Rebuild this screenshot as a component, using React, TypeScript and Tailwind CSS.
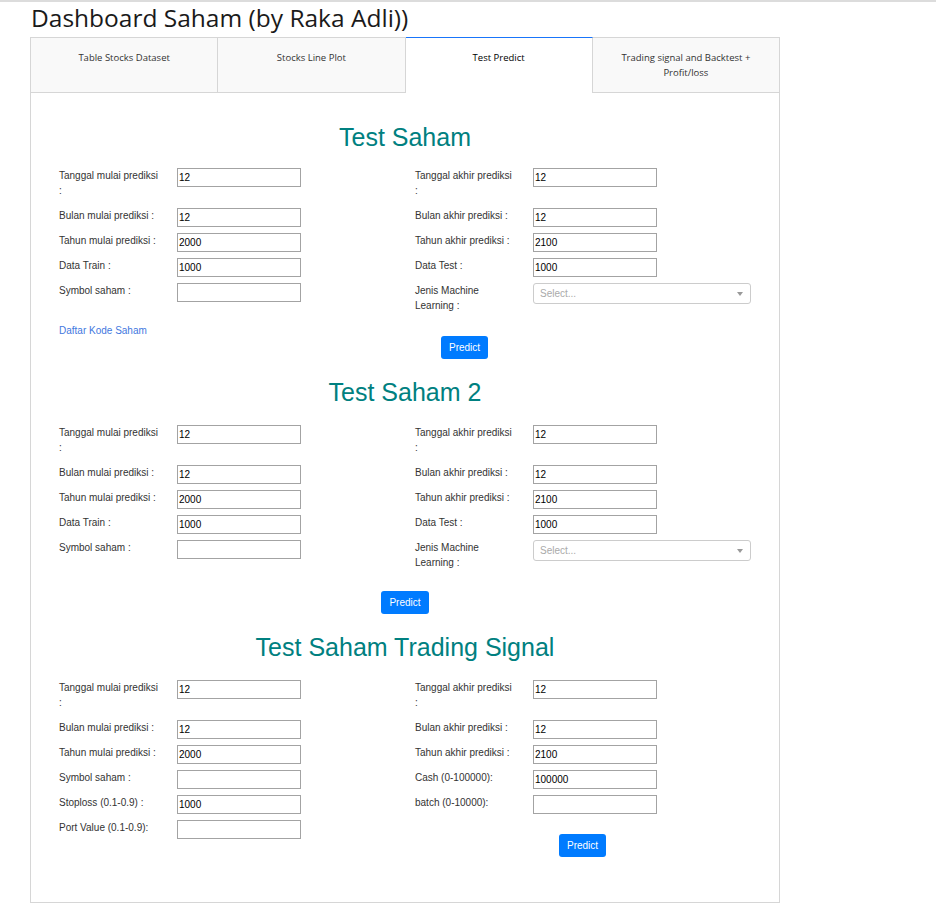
import React from "react";

const tabs = [
  "Table Stocks Dataset",
  "Stocks Line Plot",
  "Test Predict",
  "Trading signal and Backtest + Profit/loss",
];

type Row = { label: string; value?: string; select?: boolean };

function Field({ label, value, select }: Row) {
  return (
    <div className="flex items-start">
      <div className="w-[118px] pr-[18px] pb-[4px] leading-[15px] text-[10px] text-[#333]">{label}</div>
      {select ? (
        <div className="w-[218px] h-[21px] border border-[#cccccc] rounded-[3px] bg-white flex items-center justify-between pl-[6px] pr-[7px]">
          <span className="text-[10px] text-[#aaaaaa]">Select...</span>
          <span className="w-0 h-0 border-x-[3px] border-t-[4px] border-x-transparent border-t-[#999999]" />
        </div>
      ) : (
        <div className="w-[124px] h-[19px] border border-[#a3a3a3] bg-white flex items-center pl-[1px] text-[10px] text-black">
          {value}
        </div>
      )}
    </div>
  );
}

function Column({ rows, children }: { rows: Row[]; children?: React.ReactNode }) {
  return (
    <div className="flex flex-col gap-[6px]">
      {rows.map((r) => (
        <Field key={r.label} {...r} />
      ))}
      {children}
    </div>
  );
}

function PredictButton() {
  return (
    <button className="h-[23px] px-[8px] rounded-[3px] bg-[#007bff] text-white text-[10px]">Predict</button>
  );
}

function Title({ children, first }: { children: React.ReactNode; first?: boolean }) {
  return (
    <h2
      className={`text-center text-[25px] leading-[28px] text-[#008080] ${first ? "mb-[17px]" : "mb-[19px]"}`}
    >
      {children}
    </h2>
  );
}

const leftA: Row[] = [
  { label: "Tanggal mulai prediksi :", value: "12" },
  { label: "Bulan mulai prediksi :", value: "12" },
  { label: "Tahun mulai prediksi :", value: "2000" },
  { label: "Data Train :", value: "1000" },
  { label: "Symbol saham :", value: "" },
];

const rightA: Row[] = [
  { label: "Tanggal akhir prediksi :", value: "12" },
  { label: "Bulan akhir prediksi :", value: "12" },
  { label: "Tahun akhir prediksi :", value: "2100" },
  { label: "Data Test :", value: "1000" },
  { label: "Jenis Machine Learning :", select: true },
];

const leftC: Row[] = [
  { label: "Tanggal mulai prediksi :", value: "12" },
  { label: "Bulan mulai prediksi :", value: "12" },
  { label: "Tahun mulai prediksi :", value: "2000" },
  { label: "Symbol saham :", value: "" },
  { label: "Stoploss (0.1-0.9) :", value: "1000" },
  { label: "Port Value (0.1-0.9):", value: "" },
];

const rightC: Row[] = [
  { label: "Tanggal akhir prediksi :", value: "12" },
  { label: "Bulan akhir prediksi :", value: "12" },
  { label: "Tahun akhir prediksi :", value: "2100" },
  { label: "Cash (0-100000):", value: "100000" },
  { label: "batch (0-10000):", value: "" },
];

export default function App() {
  return (
    <div className="w-[936px] min-h-[919px] bg-white font-['Liberation_Sans',Arial,sans-serif]">
      <div className="h-[2px] bg-[#dcdcdc]" />
      <h1 className="pl-[31px] text-[24.5px] leading-[32px] text-[#1a1a1a] mb-[3px] font-['Open_Sans',sans-serif]">
        Dashboard Saham (by Raka Adli))
      </h1>

      <div className="ml-[30px] w-[750px] border-x border-b border-[#d6d6d6]">
        {/* Tabs */}
        <div className="flex font-['Open_Sans',sans-serif] text-[9.5px] leading-[15px]">
          {tabs.map((t, i) => {
            const selected = i === 2;
            return (
              <div
                key={t}
                className={`flex-1 text-center py-[12px] px-[20px] border-t ${
                  i < 3 ? "border-r border-r-[#d6d6d6]" : ""
                } ${
                  selected
                    ? "bg-white border-t-[#1975fa] text-black"
                    : "bg-[#f9f9f9] border-t-[#d6d6d6] border-b border-b-[#d6d6d6] text-[#333]"
                }`}
              >
                {t}
              </div>
            );
          })}
        </div>

        {/* Content */}
        <div className="pt-[30px] pb-[45px]">
          <Title first>Test Saham</Title>
          <div className="grid grid-cols-[356px_356px] pl-[28px]">
            <Column rows={leftA} />
            <Column rows={rightA} />
          </div>
          <div className="flex items-start pl-[28px] mt-[6px]">
            <a className="w-[382px] text-[10px] leading-[15px] text-[#3f78e0]">Daftar Kode Saham</a>
            <div className="mt-[11px]">
              <PredictButton />
            </div>
          </div>

          <div className="mt-[19px]">
            <Title>Test Saham 2</Title>
            <div className="grid grid-cols-[356px_356px] pl-[28px]">
              <Column rows={leftA} />
              <Column rows={rightA} />
            </div>
            <div className="flex justify-center mt-[17px]">
              <PredictButton />
            </div>
          </div>

          <div className="mt-[19px]">
            <Title>Test Saham Trading Signal</Title>
            <div className="grid grid-cols-[356px_356px] pl-[28px]">
              <Column rows={leftC} />
              <Column rows={rightC}>
                <div className="mt-[12px] ml-[144px]">
                  <PredictButton />
                </div>
              </Column>
            </div>
          </div>
        </div>
      </div>
    </div>
  );
}
